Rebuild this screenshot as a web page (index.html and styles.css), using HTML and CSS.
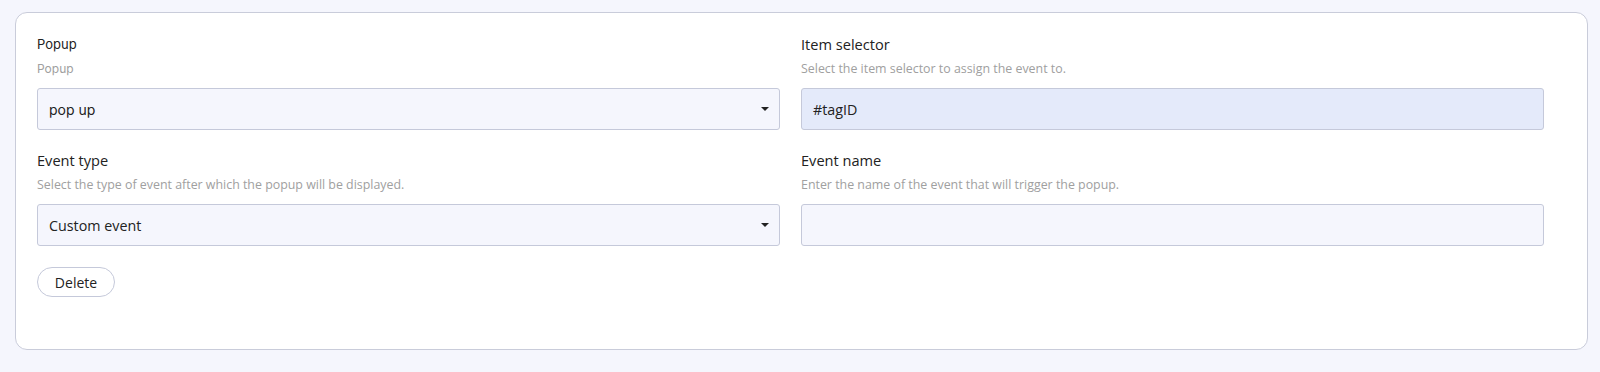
FILE: index.html
```html
<!DOCTYPE html>
<html lang="en">
<head>
  <meta charset="UTF-8" />
  <meta name="viewport" content="width=device-width, initial-scale=1.0" />
  <title>Popup event</title>
  <link rel="stylesheet" href="styles.css">
</head>
<body>
  <div class="card">
    <div class="grid">
      <div class="field">
        <label class="label alt">Popup</label>
        <p class="hint alt">Popup</p>
        <div class="select">
          <span class="value alt">pop up</span>
          <span class="caret"></span>
        </div>
      </div>
      <div class="field">
        <label class="label">Item selector</label>
        <p class="hint">Select the item selector to assign the event to.</p>
        <div class="input filled">
          <span class="value">#tagID</span>
        </div>
      </div>
      <div class="field">
        <label class="label">Event type</label>
        <p class="hint">Select the type of event after which the popup will be displayed.</p>
        <div class="select">
          <span class="value">Custom event</span>
          <span class="caret"></span>
        </div>
      </div>
      <div class="field">
        <label class="label">Event name</label>
        <p class="hint">Enter the name of the event that will trigger the popup.</p>
        <div class="input"></div>
      </div>
    </div>
    <button class="delete">Delete</button>
  </div>
</body>
</html>
```

FILE: styles.css
```css
* {
  margin: 0;
  padding: 0;
  box-sizing: border-box;
}
body {
  font-family: 'Open Sans', 'Noto Sans', sans-serif;
  background: #f5f6fd;
  color: #222;
  padding: 12px 12px 0 15px;
}
.card {
  background: #fff;
  border: 1px solid #c9ccda;
  border-radius: 12px;
  padding: 21px 43px 52px 21px;
  height: 338px;
}
.grid {
  display: grid;
  grid-template-columns: 1fr 1fr;
  column-gap: 21px;
  row-gap: 20px;
}
.label {
  display: block;
  font-size: 14.6px;
  line-height: 20px;
  color: #222;
}
.hint {
  font-size: 12.4px;
  line-height: 18px;
  color: #a0a0a0;
  margin-top: 6px;
  margin-bottom: 10px;
}
.alt {
  font-family: 'Inter', 'Roboto', sans-serif;
}
.label.alt {
  font-size: 13px;
}
.hint.alt {
  font-size: 12px;
}
.select,
.input {
  height: 42px;
  background: #f5f6fd;
  border: 1px solid #c5c9da;
  border-radius: 3px;
  display: flex;
  align-items: center;
  justify-content: space-between;
  padding: 0 10px 0 11px;
}
.input.filled {
  background: #e4eafa;
}
.value {
  font-size: 14.3px;
  color: #222;
}
.value.alt {
  font-size: 14px;
}
.caret {
  width: 0;
  height: 0;
  border-left: 4px solid transparent;
  border-right: 4px solid transparent;
  border-top: 4px solid #222;
}
.delete {
  margin-top: 21px;
  font-family: 'Open Sans', 'Noto Sans', sans-serif;
  font-size: 14px;
  color: #222;
  background: #fff;
  border: 1px solid #c5c9da;
  border-radius: 15px;
  height: 30px;
  width: 78px;
  cursor: pointer;
}
```
